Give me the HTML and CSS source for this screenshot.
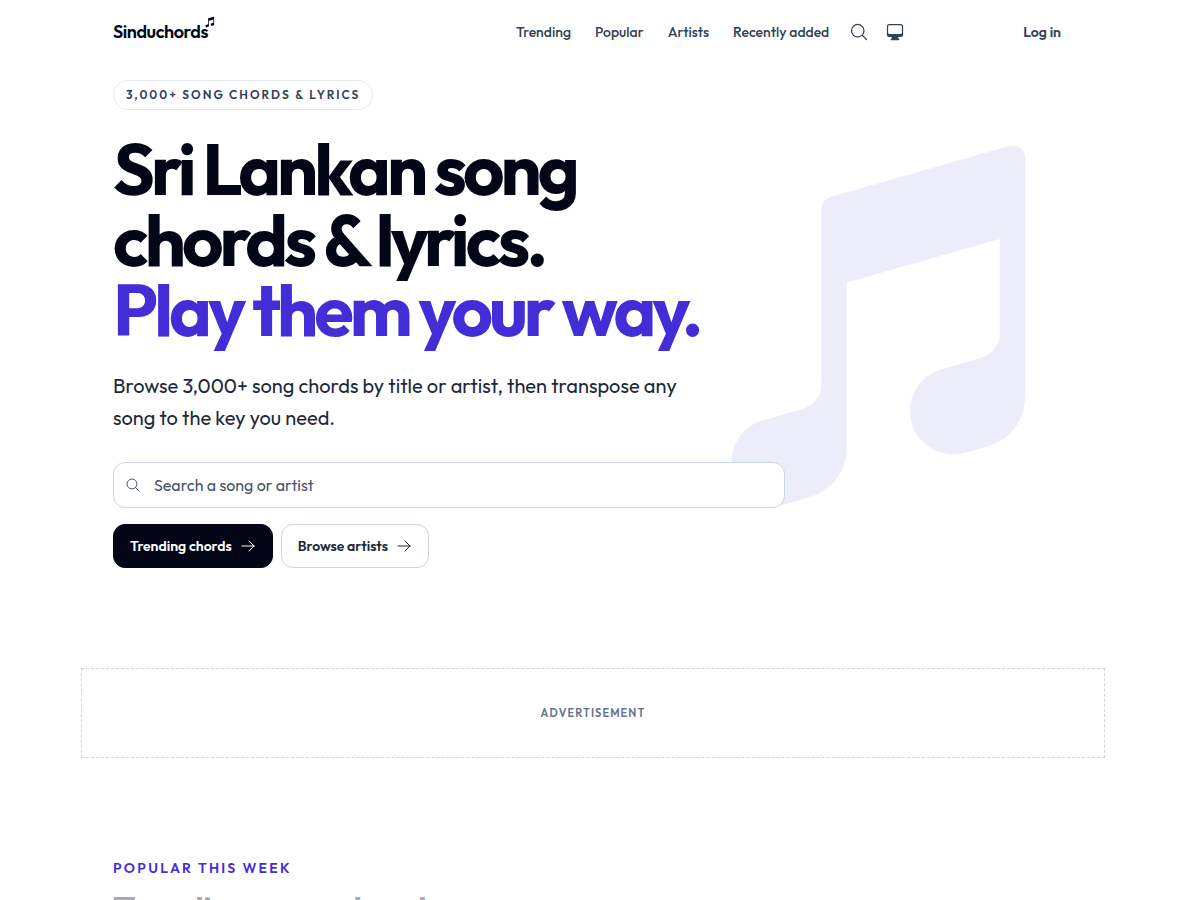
FILE: index.html
```html
<!DOCTYPE html>
<html lang="en">
<head>
  <meta charset="utf-8">
  <meta name="viewport" content="width=device-width, initial-scale=1">
  <title>Sinduchords</title>
  <link rel="stylesheet" href="styles.css">
</head>
<body>

  <svg class="sprite" aria-hidden="true">
    <symbol id="icon-note" viewBox="0 0 24 24">
      <path fill="currentColor" fill-rule="evenodd" d="M19.952 1.651a.75.75 0 0 1 .298.599V16.303a3 3 0 0 1-2.176 2.884l-1.32.377a2.553 2.553 0 1 1-1.403-4.909l2.311-.66a1.5 1.5 0 0 0 1.088-1.442V6.994l-9 2.572v9.737a3 3 0 0 1-2.176 2.884l-1.32.377a2.553 2.553 0 1 1-1.402-4.909l2.31-.66a1.5 1.5 0 0 0 1.088-1.442V5.25a.75.75 0 0 1 .544-.721l10.5-3a.75.75 0 0 1 .658.122Z"/>
    </symbol>
    <symbol id="icon-search" viewBox="0 0 24 24">
      <path fill="none" stroke="currentColor" stroke-width="1.5" stroke-linecap="round" stroke-linejoin="round" d="m21 21-5.197-5.197m0 0A7.5 7.5 0 1 0 5.196 5.196a7.5 7.5 0 0 0 10.607 10.607Z"/>
    </symbol>
    <symbol id="icon-desktop" viewBox="0 0 24 24">
      <path fill="currentColor" fill-rule="evenodd" d="M2.25 5.25a3 3 0 0 1 3-3h13.5a3 3 0 0 1 3 3V15a3 3 0 0 1-3 3h-3v.257c0 .597.237 1.17.659 1.591l.621.622a.75.75 0 0 1-.53 1.28h-9a.75.75 0 0 1-.53-1.28l.621-.622a2.25 2.25 0 0 0 .659-1.59V18h-3a3 3 0 0 1-3-3V5.25Zm1.5 0v7.5a1.5 1.5 0 0 0 1.5 1.5h13.5a1.5 1.5 0 0 0 1.5-1.5v-7.5a1.5 1.5 0 0 0-1.5-1.5H5.25a1.5 1.5 0 0 0-1.5 1.5Z"/>
    </symbol>
    <symbol id="icon-arrow" viewBox="0 0 24 24">
      <path fill="none" stroke="currentColor" stroke-width="1.5" stroke-linecap="round" stroke-linejoin="round" d="M13.5 4.5 21 12m0 0-7.5 7.5M21 12H3"/>
    </symbol>
  </svg>

  <header class="header container">
    <a class="logo" href="#">Sinduchords<svg class="logo-note" aria-hidden="true"><use href="#icon-note"/></svg></a>
    <nav class="nav">
      <a href="#trending">Trending</a>
      <a href="#popular">Popular</a>
      <a href="#artists">Artists</a>
      <a href="#recent">Recently added</a>
    </nav>
    <div class="tools">
      <button class="icon-btn" type="button" aria-label="Search"><svg><use href="#icon-search"/></svg></button>
      <button class="icon-btn" type="button" aria-label="Theme"><svg><use href="#icon-desktop"/></svg></button>
    </div>
    <a class="login" href="#login">Log in</a>
  </header>

  <main>
    <section class="hero container">
      <svg class="hero-note" aria-hidden="true"><use href="#icon-note"/></svg>
      <div class="hero-content">
        <p class="pill">3,000+ song chords &amp; lyrics</p>
        <h1 class="hero-title">Sri Lankan song<br>chords &amp; lyrics.<br><span class="accent">Play them your way.</span></h1>
        <p class="lead">Browse 3,000+ song chords by title or artist, then transpose any song to the key you need.</p>
        <form class="search">
          <svg class="search-icon" aria-hidden="true"><use href="#icon-search"/></svg>
          <input class="search-input" type="search" placeholder="Search a song or artist" aria-label="Search a song or artist">
        </form>
        <div class="actions">
          <a class="btn btn-dark" href="#trending">Trending chords <svg><use href="#icon-arrow"/></svg></a>
          <a class="btn" href="#artists">Browse artists <svg><use href="#icon-arrow"/></svg></a>
        </div>
      </div>
    </section>

    <aside class="ad">Advertisement</aside>

    <section class="trending container" id="trending">
      <p class="eyebrow">Popular this week</p>
      <h2 class="section-title">Trending song chords</h2>
    </section>
  </main>

</body>
</html>
```
FILE: styles.css
```css
:root {
  --ink: #020617;
  --text: #1e293b;
  --muted: #334155;
  --placeholder: #475569;
  --border: #cbd5e1;
  --accent: #432dd7;
  --radius: 12px;
}

* {
  box-sizing: border-box;
}

body {
  margin: 0;
  /* room for the scrollbar */
  padding-right: 14px;
  font-family: Outfit, Lato, sans-serif;
  color: var(--text);
  background-color: #fff;
}

h1, h2, p {
  margin: 0;
}

a {
  color: inherit;
  text-decoration: none;
}

.sprite {
  display: none;
}

.container {
  max-width: 1024px;
  margin: 0 auto;
  padding: 0 32px;
}

/* Header */
.header {
  display: flex;
  align-items: center;
  height: 64px;
  font-size: 14px;
  font-weight: 500;
  color: var(--muted);
}

.logo {
  display: flex;
  margin-right: auto;
  font-size: 18px;
  font-weight: 600;
  line-height: 24px;
  letter-spacing: -0.025em;
  color: var(--ink);
}

.logo-note {
  width: 12px;
  height: 12px;
  margin: -4px 0 0 -4px;
}

.nav {
  display: flex;
  gap: 24px;
}

.tools {
  display: flex;
  margin: 0 98px 0 12px;
}

.icon-btn {
  display: flex;
  align-items: center;
  justify-content: center;
  width: 36px;
  height: 36px;
  padding: 0;
  border: 0;
  color: inherit;
  background: none;
  cursor: pointer;
}

.icon-btn svg {
  width: 20px;
  height: 20px;
}

.login {
  padding: 0 12px;
  font-weight: 600;
}

/* Hero */
.hero {
  position: relative;
  padding-top: 16px;
  padding-bottom: 100px;
}

.hero-note {
  position: absolute;
  top: 56px;
  right: 16px;
  width: 408px;
  height: 408px;
  color: #edecfb;
}

.hero-content {
  position: relative;
  max-width: 672px;
}

.pill {
  display: inline-block;
  padding: 6px 12px;
  border: 1px solid #e2e8f0;
  border-radius: 15px;
  font-size: 12px;
  font-weight: 600;
  line-height: 16px;
  letter-spacing: 2px;
  text-transform: uppercase;
  color: var(--muted);
  vertical-align: top;
}

.hero-title {
  margin-top: 24px;
  font-size: 72px;
  font-weight: 700;
  line-height: 0.98;
  letter-spacing: -0.055em;
  white-space: nowrap;
  color: var(--ink);
}

.accent {
  color: var(--accent);
}

.lead {
  max-width: 576px;
  margin-top: 24px;
  font-size: 20px;
  line-height: 32px;
}

.search {
  display: flex;
  align-items: center;
  gap: 13px;
  height: 46px;
  margin-top: 28px;
  padding: 0 11px;
  border: 1px solid var(--border);
  border-radius: var(--radius);
  background-color: #fff;
}

.search-icon {
  width: 16px;
  height: 16px;
  color: var(--placeholder);
}

.search-input {
  flex: 1;
  padding: 0;
  border: 0;
  outline: 0;
  font: inherit;
  font-size: 16px;
  background: none;
}

.search-input::placeholder {
  color: var(--placeholder);
}

.actions {
  display: flex;
  gap: 8px;
  margin-top: 16px;
}

.btn {
  display: flex;
  align-items: center;
  gap: 8px;
  height: 44px;
  padding: 0 16px;
  border: 1px solid var(--border);
  border-radius: var(--radius);
  font-size: 14px;
  font-weight: 600;
  background-color: #fff;
}

.btn svg {
  width: 16px;
  height: 16px;
}

.btn-dark {
  border-color: var(--ink);
  color: #fff;
  background-color: var(--ink);
}

/* Advertisement */
.ad {
  display: flex;
  align-items: center;
  justify-content: center;
  max-width: 1024px;
  height: 90px;
  margin: 0 auto;
  border: 1px dashed #d4d4d8;
  font-size: 11px;
  font-weight: 600;
  letter-spacing: 0.1em;
  text-transform: uppercase;
  color: #64748b;
}

/* Trending */
.trending {
  padding-top: 100px;
  padding-bottom: 100px;
}

.eyebrow {
  font-size: 14px;
  font-weight: 600;
  line-height: 20px;
  letter-spacing: 0.16em;
  text-transform: uppercase;
  color: var(--accent);
}

.section-title {
  margin-top: 12px;
  font-size: 36px;
  font-weight: 600;
  line-height: 40px;
  letter-spacing: -0.025em;
  color: #a9a9ad;
}
```
